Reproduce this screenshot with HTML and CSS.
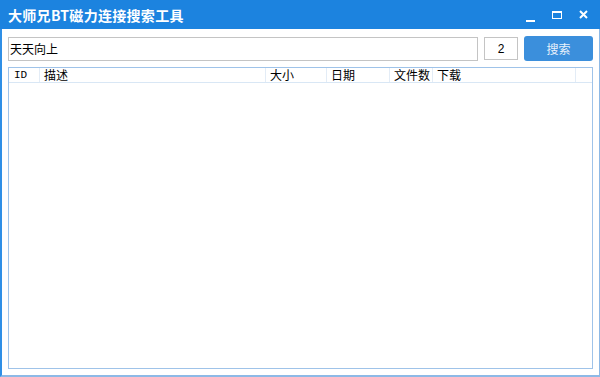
FILE: index.html
```html
<!DOCTYPE html>
<html lang="zh-CN">
<head>
    <meta charset="UTF-8">
    <title>大师兄BT磁力连接搜索工具</title>
    <link rel="stylesheet" href="styles.css">
</head>
<body>

<div class="window">
    <div class="titlebar">
        <span class="title">大师兄BT磁力连接搜索工具</span>
        <div class="controls">
            <span class="ctl ctl-min"></span>
            <span class="ctl ctl-max"></span>
            <svg class="ctl-close" width="9" height="9" viewBox="0 0 9 9">
                <path d="M1 1 L8 8 M8 1 L1 8" stroke="#fff" stroke-width="2"/>
            </svg>
        </div>
    </div>

    <div class="main">
        <div class="toolbar">
            <input type="text" class="keyword" value="天天向上">
            <input type="text" class="pages" value="2">
            <button type="button" class="search-btn">搜索</button>
        </div>

        <div class="list">
            <div class="list-head">
                <span class="col col-id">ID</span>
                <span class="col col-desc">描述</span>
                <span class="col col-size">大小</span>
                <span class="col col-date">日期</span>
                <span class="col col-files">文件数</span>
                <span class="col col-down">下载</span>
                <span class="col col-rest"></span>
            </div>
        </div>
    </div>
</div>

</body>
</html>
```

FILE: styles.css
```css
body {
    margin: 0;
    font-family: "Noto Sans CJK SC", "Liberation Sans", sans-serif;
    font-size: 12px;
    color: #000;
    background: #fff;
}
.window {
    width: 600px;
    height: 377px;
    display: flex;
    flex-direction: column;
    box-sizing: border-box;
}
.titlebar {
    height: 29px;
    flex: none;
    background-color: #1c83df;
    display: flex;
    align-items: center;
    justify-content: space-between;
    padding: 0 12px 0 8px;
}
.title {
    color: #fff;
    font-size: 14px;
    font-weight: bold;
    letter-spacing: 0.3px;
}
.controls {
    display: flex;
    align-items: center;
    gap: 17px;
}
.ctl {
    display: block;
    box-sizing: border-box;
}
.ctl-min {
    width: 9px;
    height: 2px;
    background: #fff;
    margin-top: 12px;
}
.ctl-max {
    width: 10px;
    height: 8px;
    border: 1px solid #fff;
    border-top-width: 2px;
}
.ctl-close {
    display: block;
}
.main {
    flex: 1;
    display: flex;
    flex-direction: column;
    border-left: 2px solid #2f8fe6;
    border-right: 1px solid #8db9e6;
    border-bottom: 2px solid #8db9e6;
    padding: 7px 6px 6px 6px;
    gap: 6px;
}
.toolbar {
    display: flex;
    align-items: center;
    height: 25px;
}
.keyword {
    width: 471px;
    height: 24px;
    box-sizing: border-box;
    border: 1px solid #c4c4c4;
    padding: 0 1px;
    font-family: "Noto Sans CJK SC", sans-serif;
    font-size: 12px;
    color: #000;
    outline: none;
}
.pages {
    width: 34px;
    height: 23px;
    box-sizing: border-box;
    margin-left: 6px;
    border: 1px solid #c4c4c4;
    text-align: center;
    font-family: "Liberation Sans", sans-serif;
    font-size: 12px;
    outline: none;
}
.search-btn {
    width: 69px;
    height: 25px;
    margin-left: 6px;
    border: none;
    border-radius: 3px;
    background-color: #3b8fdc;
    color: #e8f1fb;
    font-family: "Noto Sans CJK SC", sans-serif;
    font-size: 12px;
}
.list {
    flex: 1;
    border: 1px solid #9fc3e9;
    background: #fff;
}
.list-head {
    display: flex;
    height: 14px;
    border-bottom: 1px solid #d9e7f5;
    line-height: 14px;
}
.col {
    box-sizing: border-box;
    padding-left: 4px;
    border-right: 1px solid #e3ecf6;
    white-space: nowrap;
}
.col-id {
    width: 31px;
    padding-left: 5px;
    font-family: "Liberation Mono", monospace;
    font-size: 11px;
}
.col-desc { width: 226px; }
.col-size { width: 61px; }
.col-date { width: 63px; }
.col-files { width: 43px; }
.col-down { width: 143px; }
.col-rest { flex: 1; border-right: none; }
```
